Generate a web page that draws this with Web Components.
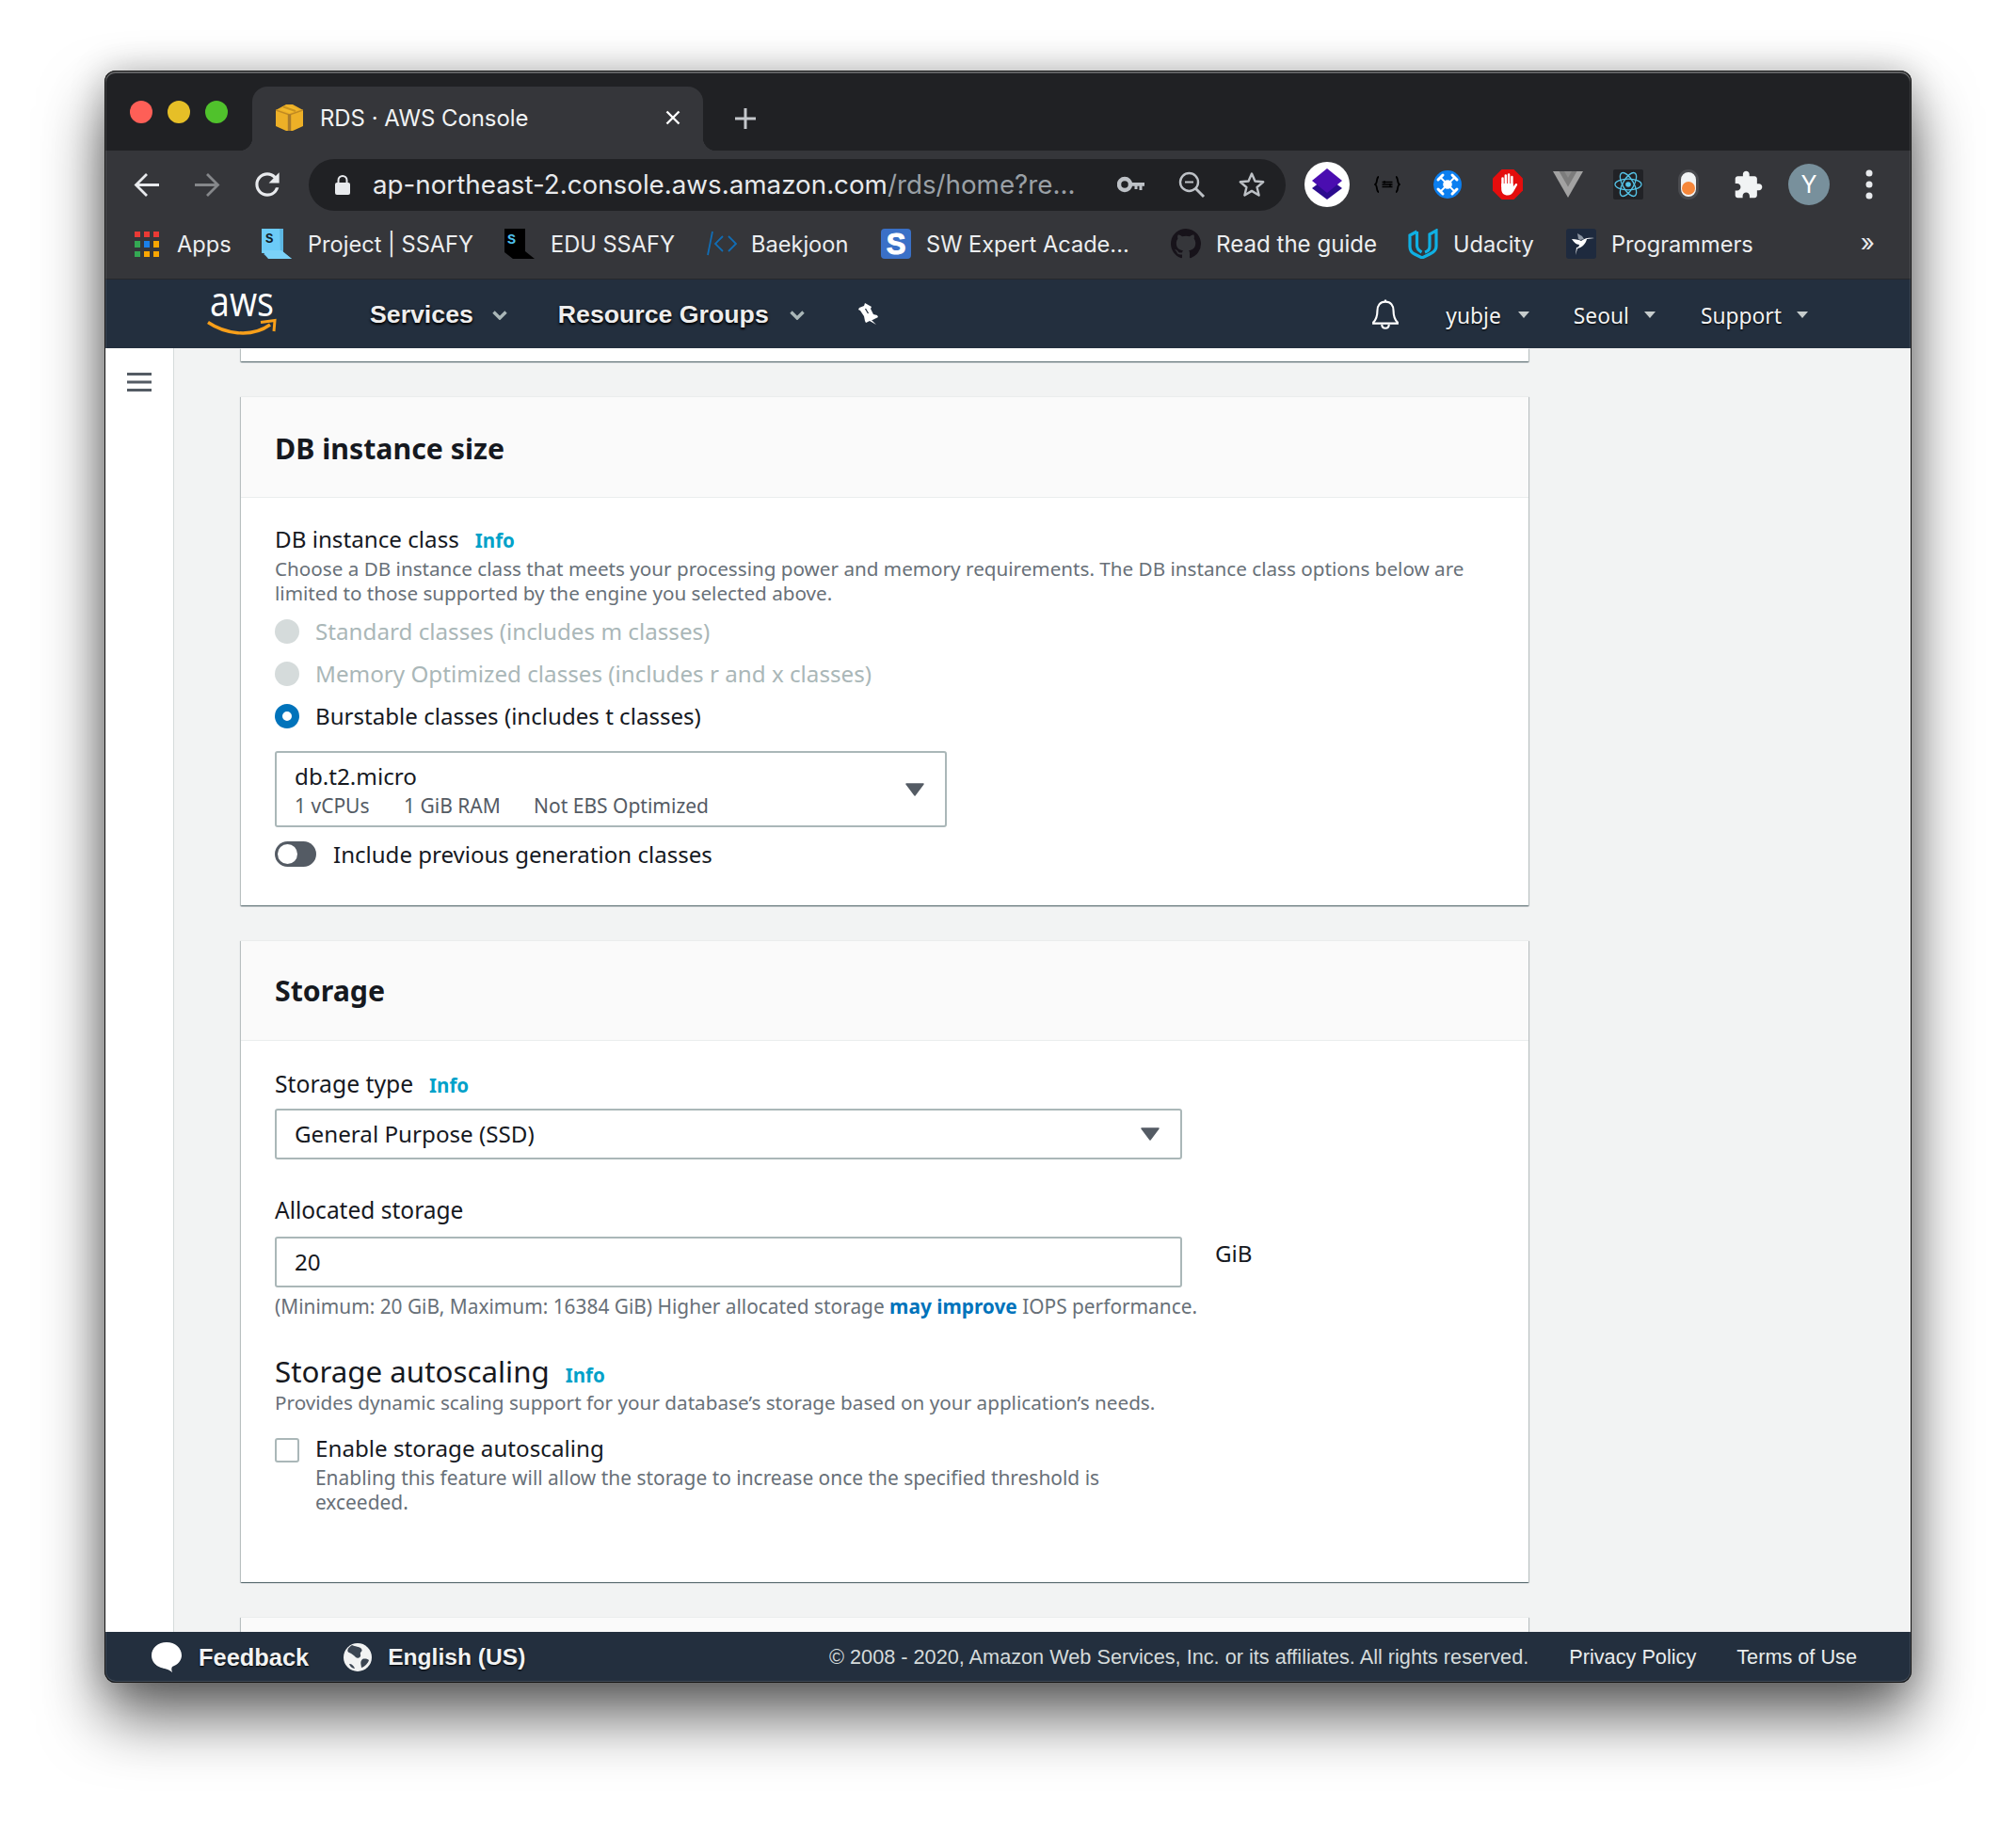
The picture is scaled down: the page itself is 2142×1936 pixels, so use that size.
<!doctype html>
<html lang="en"><head><meta charset="utf-8"><title>RDS · AWS Console</title>
<style>
html,body{margin:0;background:#fff}
body{padding:75px 111px 0;height:1936px;box-sizing:border-box;overflow:hidden;font-family:"Noto Sans",sans-serif}
</style></head>
<body>
<browser-window>
  <tab-strip>
    <traffic-lights></traffic-lights>
    <browser-tab label="RDS · AWS Console"><app-icon name="box"></app-icon></browser-tab>
  </tab-strip>
  <browser-toolbar>
    <address-row url="ap-northeast-2.console.aws.amazon.com" rest="/rds/home?re..."></address-row>
    <bookmark-bar>
      <bookmark-item w="135" gap="19"><app-icon name="apps"></app-icon>Apps</bookmark-item>
      <bookmark-item w="258" gap="17"><app-icon name="ssafy"></app-icon>Project | SSAFY</bookmark-item>
      <bookmark-item w="215" gap="17"><app-icon name="edu"></app-icon>EDU SSAFY</bookmark-item>
      <bookmark-item w="185" gap="15"><app-icon name="boj"></app-icon>Baekjoon</bookmark-item>
      <bookmark-item w="308" gap="16"><app-icon name="swea"></app-icon>SW Expert Acade...</bookmark-item>
      <bookmark-item w="252" gap="16" style="font-size:24.100px"><app-icon name="github"></app-icon>Read the guide</bookmark-item>
      <bookmark-item w="168" gap="16"><app-icon name="udacity"></app-icon>Udacity</bookmark-item>
      <bookmark-item w="200" gap="16"><app-icon name="programmers"></app-icon>Programmers</bookmark-item>
    </bookmark-bar>
  </browser-toolbar>
  <aws-nav></aws-nav>
  <console-main>
    <form-panel stub></form-panel>
    <form-panel heading="DB instance size" style="--head:108px;--hp:4px;--pad:29px;--bottom:41px">
      <field-label info="Info">DB instance class</field-label>
      <help-text style="margin-top:3px;font-size:20.670px">Choose a DB instance class that meets your processing power and memory requirements. The DB instance class options below are limited to those supported by the engine you selected above.</help-text>
      <radio-row disabled style="margin-top:5px">Standard classes (includes m classes)</radio-row>
      <radio-row disabled>Memory Optimized classes (includes r and x classes)</radio-row>
      <radio-row checked style="font-size:24.100px">Burstable classes (includes t classes)</radio-row>
      <select-box style="width:714px;height:81px;margin-top:15px" arrow="35">
        <div style="line-height:34px;margin-top:-1px">db.t2.micro</div>
        <instance-specs></instance-specs>
      </select-box>
      <toggle-row style="margin-top:15px">Include previous generation classes</toggle-row>
    </form-panel>
    <form-panel heading="Storage" style="--head:107px;--hp:1px;--pad:31px;--bottom:72px">
      <field-label info="Info" style="font-size:24.700px">Storage type</field-label>
      <select-box style="width:964px;height:54px;margin-top:11px" arrow="35">General Purpose (SSD)</select-box>
      <field-label style="margin-top:39px;font-size:24.500px">Allocated storage</field-label>
      <unit-row style="margin-top:13px" unit="GiB"><select-box style="width:964px;height:54px" noarrow>20</select-box></unit-row>
      <help-text style="margin-top:7px;white-space:nowrap;font-size:20.850px">(Minimum: 20 GiB, Maximum: 16384 GiB) Higher allocated storage <b style="color:#0073bb">may improve</b> IOPS performance.</help-text>
      <field-label large info="Info" style="margin-top:36px">Storage autoscaling</field-label>
      <help-text style="font-size:20.700px">Provides dynamic scaling support for your database’s storage based on your application’s needs.</help-text>
      <check-row style="margin-top:21px" desc="Enabling this feature will allow the storage to increase once the specified threshold is exceeded.">Enable storage autoscaling</check-row>
    </form-panel>
    <form-panel heading=" " style="--head:105px;--pad:0px;--bottom:0px"></form-panel>
  </console-main>
  <aws-footer></aws-footer>
</browser-window>

<script>
const ICONS={
box:`<svg width="29" height="28" viewBox="0 0 29 28"><path d="M0 6 11 0h7l11 6v17l-11 5h-7L0 23z" fill="#edb027"/><path d="M5 5.500 14.500 9 24 5.500 16 2h-3z" fill="#f2b92c"/><path d="M0 6l14.500 5L29 6" fill="none" stroke="#c08a22" stroke-width="1.500"/><path d="M12.800 10.500h3.400V28h-3.400z" fill="#a97c2c"/><path d="M8 2.500l13 4.500" stroke="#c9931f" stroke-width="2"/></svg>`,
close:`<svg width="18" height="18" viewBox="0 0 18 18"><path d="M2.500 2.500l13 13M15.500 2.500l-13 13" stroke="#fff" stroke-width="2.400" fill="none"/></svg>`,
plus:`<svg width="24" height="24" viewBox="0 0 24 24"><path d="M12 1v22M1 12h22" stroke="#c4c7cb" stroke-width="3" fill="none"/></svg>`,
back:`<svg width="28" height="28" viewBox="0 0 28 28"><path d="M27 14.500H3M14 3 2.500 14.500 14 26" stroke="#e8eaed" stroke-width="2.800" fill="none"/></svg>`,
forward:`<svg width="28" height="28" viewBox="0 0 28 28"><path d="M1 14.500h24M14 3l11.500 11.500L14 26" stroke="#85878a" stroke-width="2.800" fill="none"/></svg>`,
reload:`<svg width="38" height="38" viewBox="0 0 24 24"><path fill="#e8eaed" d="M17.650 6.350A7.958 7.958 0 0012 4c-4.420 0-7.990 3.580-7.990 8s3.570 8 7.990 8c3.730 0 6.840-2.550 7.730-6h-2.080A5.990 5.990 0 0112 18c-3.310 0-6-2.690-6-6s2.690-6 6-6c1.660 0 3.140.69 4.220 1.780L13 11h7V4l-2.350 2.350z"/></svg>`,
lock:`<svg width="16" height="21" viewBox="0 0 16 21"><rect y="8" width="16" height="13" rx="2" fill="#e8eaed"/><path d="M3.500 9V5.500a4.500 4.500 0 019 0V9" fill="none" stroke="#e8eaed" stroke-width="2"/></svg>`,
key:`<svg width="30" height="18" viewBox="0 0 30 18"><circle cx="8" cy="9" r="6" fill="none" stroke="#bdc1c6" stroke-width="4.500"/><path d="M13 7h16v3.800h-2.500V15h-3v-4.200h-2V14h-3v-3.200H13z" fill="#bdc1c6"/></svg>`,
zoom:`<svg width="30" height="30" viewBox="0 0 30 30"><circle cx="12.500" cy="12.500" r="9.500" fill="none" stroke="#bdc1c6" stroke-width="2.400"/><path d="M19.500 19.500 28 28" stroke="#bdc1c6" stroke-width="3"/><path d="M8 12.500h9" stroke="#bdc1c6" stroke-width="2.200"/></svg>`,
star:`<svg width="30" height="30" viewBox="0 0 30 30"><path d="M15 3.500l3.500 8 8.700.8-6.600 5.700 2 8.500L15 21.900l-7.600 4.600 2-8.500-6.600-5.700 8.700-.8z" fill="none" stroke="#bdc1c6" stroke-width="2.400" stroke-linejoin="round"/></svg>`,
stack:`<svg width="48" height="48" viewBox="0 0 48 48"><circle cx="24" cy="24" r="24" fill="#fff"/><path d="M8 28 24 16l16 12-16 12z" fill="#2b0b8e"/><path d="M8 20 24 7l16 13-16 13z" fill="#4a0db0"/></svg>`,
braces:`<svg width="28" height="18" viewBox="0 0 28 18" fill="none" stroke="#000" stroke-width="1.800"><path d="M5 1C2 1 4 8 1 9c3 1 1 8 4 8M23 1c3 0 1 7 4 8-3 1-1 8-4 8"/><path d="M8.500 6.500h11M8.500 9h11M8.500 11.500h11" stroke-width="1.400"/><path d="M11 5v3M17 8v3" stroke-width="1.300"/></svg>`,
drone:`<svg width="30" height="30" viewBox="0 0 30 30"><circle cx="15" cy="15" r="15" fill="#0b7ff0"/><path d="M7.500 7.500l15 15M22.500 7.500l-15 15" stroke="#fff" stroke-width="1.800"/><circle cx="15" cy="15" r="4.800" fill="#fff"/><g stroke="#fff" stroke-width="3" stroke-linecap="round"><path d="M5 10l5-5M20 5l5 5M5 20l5 5M25 20l-5 5"/></g></svg>`,
abp:`<svg width="32" height="32" viewBox="0 0 32 32"><path d="M9.500 0h13L32 9.500v13L22.500 32h-13L0 22.500v-13z" fill="#e40d0d"/><g stroke="#fff" stroke-width="2.500" stroke-linecap="round"><path d="M10.500 18V9.500M13.800 16V6.500M17.100 16V5.500M20.400 18V8"/></g><path d="M9.200 15h12.500v3.500l2.300-3c1-1 2.800-.2 2 1.300l-4 7c-1.300 2.400-3.300 3.700-6 3.700-4.300 0-6.800-2.700-6.800-6.500z" fill="#fff"/></svg>`,
vee:`<svg width="32" height="28" viewBox="0 0 32 28"><path d="M0 0h32L16 28z" fill="#a2a2a2"/><path d="M6.500 0h19L16 16.500z" fill="#7c7c7c"/><path d="M12 0h8l-4 7z" fill="#8c8c8c"/></svg>`,
react:`<svg width="32" height="32" viewBox="0 0 32 32"><rect width="32" height="32" rx="2" fill="#212226"/><g fill="none" stroke="#55c4e8" stroke-width="1.300"><ellipse cx="16" cy="16" rx="14" ry="5.800"/><ellipse cx="16" cy="16" rx="14" ry="5.800" transform="rotate(60 16 16)"/><ellipse cx="16" cy="16" rx="14" ry="5.800" transform="rotate(120 16 16)"/></g><circle cx="16" cy="16" r="2.800" fill="#55c4e8"/></svg>`,
pill:`<svg width="22" height="32" viewBox="0 0 22 32"><rect x="1.500" y="1.500" width="19" height="29" rx="9.500" fill="#f1f3f4" stroke="#4a4b4f" stroke-width="3"/><circle cx="11" cy="20" r="7" fill="#f6873a"/></svg>`,
puzzle:`<svg width="30" height="30" viewBox="1.500 1 22 21"><path fill="#f1f3f4" d="M20.500 11H19V7c0-1.100-.9-2-2-2h-4V3.500C13 2.120 11.880 1 10.500 1S8 2.120 8 3.500V5H4c-1.100 0-1.990.9-1.990 2v3.800H3.500c1.490 0 2.700 1.210 2.700 2.700s-1.210 2.700-2.700 2.700H2V20c0 1.100.9 2 2 2h3.800v-1.500c0-1.490 1.210-2.700 2.700-2.700 1.490 0 2.700 1.210 2.700 2.700V22H17c1.100 0 2-.9 2-2v-4h1.500c1.380 0 2.500-1.120 2.500-2.500S21.880 11 20.500 11z"/></svg>`,
dots:`<svg width="8" height="32" viewBox="0 0 8 32"><circle cx="4" cy="4" r="3.500" fill="#e8eaed"/><circle cx="4" cy="16" r="3.500" fill="#e8eaed"/><circle cx="4" cy="28" r="3.500" fill="#e8eaed"/></svg>`,
apps:`<svg width="26" height="27" viewBox="0 0 26 27"><g fill="#ea3a35"><rect width="6" height="6"/><rect x="10" width="6" height="6"/><rect x="20" width="6" height="6"/></g><rect y="10" width="6" height="7" fill="#34a853"/><rect x="10" y="10" width="6" height="7" fill="#1a80ea"/><rect x="20" y="10" width="6" height="7" fill="#f9a602"/><rect y="21" width="6" height="6" fill="#34a853"/><rect x="10" y="21" width="6" height="6" fill="#f9a602"/><rect x="20" y="21" width="6" height="6" fill="#f9a602"/></svg>`,
ssafy:`<svg width="32" height="32" viewBox="0 0 32 32"><path d="M0 0h23v26H0z" fill="#6ccbf7"/><path d="M19 0h4v25l9 7H8l-6-5h18z" fill="#5bb4df" opacity=".9"/><path d="M0 23h21l11 9H7z" fill="#7bd2f8"/><text x="4" y="15" font-family="Liberation Mono" font-weight="700" font-size="14" fill="#101c26">S</text></svg>`,
edu:`<svg width="32" height="32" viewBox="0 0 32 32"><path d="M0 0h22v24l10 8H9l-9-7z" fill="#000"/><text x="3" y="16" font-family="Liberation Mono" font-weight="700" font-size="15" fill="#4fc3f0">S</text></svg>`,
boj:`<svg width="32" height="32" viewBox="0 0 32 32" fill="none" stroke="#116db5" stroke-width="1.800"><path d="M6 3 1 28M17 8l-8 8 8 8M23 8l8 8-8 8"/></svg>`,
swea:`<svg width="32" height="32" viewBox="0 0 32 32"><rect width="32" height="32" rx="4" fill="#3a70c7"/><text x="16" y="27" text-anchor="middle" font-family="Liberation Sans" font-weight="700" font-size="31" fill="#fff" stroke="#fff" stroke-width="1">S</text></svg>`,
github:`<svg width="32" height="32" viewBox="0 0 16 16"><path fill="#17131a" d="M8 0C3.580 0 0 3.580 0 8c0 3.540 2.290 6.530 5.470 7.590.4.070.55-.17.55-.38 0-.19-.01-.82-.01-1.490-2.010.37-2.530-.49-2.690-.94-.09-.23-.48-.94-.82-1.130-.28-.15-.68-.52-.01-.53.63-.01 1.080.58 1.230.82.72 1.210 1.870.87 2.330.66.07-.52.28-.87.51-1.070-1.780-.2-3.640-.89-3.640-3.950 0-.87.31-1.590.82-2.150-.08-.2-.36-1.020.08-2.120 0 0 .67-.21 2.200.82.64-.18 1.320-.27 2-.27.68 0 1.360.09 2 .27 1.530-1.040 2.200-.82 2.200-.82.44 1.100.16 1.920.08 2.120.51.56.82 1.270.82 2.150 0 3.070-1.870 3.750-3.650 3.950.29.25.54.73.54 1.480 0 1.070-.01 1.930-.01 2.200 0 .21.15.46.55.38A8.013 8.013 0 0016 8c0-4.420-3.580-8-8-8z"/></svg>`,
udacity:`<svg width="32" height="32" viewBox="0 0 32 32" fill="none" stroke="#0fb0e3" stroke-width="3.200"><path d="M9.500 3 2 7v12c0 4 1 6 5 8l8 4 9-4.500c4-2 6-4 6-8V2l-7 4v13c0 3-2 5-5 6"/><path d="M9.500 3v15c0 3 1.500 5 5 7"/></svg>`,
programmers:`<svg width="32" height="32" viewBox="0 0 32 32"><rect width="32" height="32" rx="3" fill="#1e2a3e"/><path d="M6 11c5 0 8 1 10 2 3-2 6-4 14-3l-8 1c-1 5-5 9-10 10l-2 7 1-8c2 0 3-2 3-3-3 0-6-3-8-6z" fill="#fff"/><path d="M13 11l-1-6 5 3 2 3-4 1z" fill="#8d96a3"/></svg>`,
bell:`<svg width="30" height="33" viewBox="0 0 28 30" fill="none" stroke="#fff" stroke-width="2"><path d="M14 3c-5.500 0-8 4-8 9 0 6-2 9.500-4 11.500v1h24v-1c-2-2-4-5.500-4-11.500 0-5-2.500-9-8-9z"/><path d="M14 1v2M10.500 25.500c0 5 7 5 7 0" /></svg>`,
pin:`<svg width="23" height="23" viewBox="0 0 23 23"><path d="M7 0l7 4-1 2 3 6 4 1 1 2-6 3-1 0 5 5-7-4-4 2-1-2-1-5-4-6-2-1 1-2 5-2z" fill="#fff"/><path d="M7.500 6l3 5" stroke="#232f3e" stroke-width="1.300"/></svg>`,
bubble:`<svg width="32" height="32" viewBox="0 0 32 32"><path d="M16 0C7 0 0 6 0 14c0 6 4 11 10 13 3 1 8 1 12 5-1-3-1-4 0-6 6-2 10-7 10-12C32 6 25 0 16 0z" fill="#fff"/></svg>`,
globe:`<svg width="30" height="30" viewBox="0 0 30 30"><circle cx="15" cy="15" r="15" fill="#f2f3f3"/><path d="M9 2c3 2 8 1 10 4s-2 3-1 6-3 5-5 3-4-4-7-5-2-5 3-8zM20 17c3-1 6 0 7 1-1 3-4 7-8 8 0-3-2-6 1-9zM6 22c3 0 5 2 6 5-3-.5-5-2-6-5z" fill="#3b4552"/></svg>`
};
function comp(name,css,html,init){
  const t=document.createElement('template');
  t.innerHTML=`<style>${css}</style>${html}`;
  customElements.define(name,class extends HTMLElement{
    constructor(){super();this.attachShadow({mode:'open'}).appendChild(t.content.cloneNode(true));}
    connectedCallback(){if(init)init(this,this.shadowRoot);}
  });
}
comp('app-icon',':host{display:inline-flex;line-height:0;flex:none}','<span id="i"></span>',(h,s)=>{s.getElementById('i').innerHTML=ICONS[h.getAttribute('name')]||''});
comp('browser-window',`:host{display:flex;flex-direction:column;position:relative;width:1920px;height:1713px;border-radius:12px;background:#202124;box-shadow:0 36px 66px rgba(0,0,0,.62),0 0 36px rgba(0,0,0,.22)}
#clip{display:flex;flex-direction:column;flex:1;min-height:0;border-radius:12px;overflow:hidden}
#edge{position:absolute;inset:0;border-radius:12px;pointer-events:none;box-shadow:inset 0 0 0 1px #131313,inset 0 2px 0 1px rgba(255,255,255,.24),inset 0 0 0 2px rgba(255,255,255,.14)}`,
`<div id="clip"><slot></slot></div><div id="edge"></div>`);
comp('tab-strip',`:host{display:flex;height:85px;flex:none;background:#202124;align-items:flex-end}`,`<slot></slot><app-icon name="plus" style="margin:0 0 22px 33px"></app-icon>`);
comp('traffic-lights',`:host{display:flex;gap:16px;padding:0 26px 29px 27px;align-self:flex-end}i{width:24px;height:24px;border-radius:50%;display:block}`,`<i style="background:#fe5f57"></i><i style="background:#e6bf27"></i><i style="background:#50c22c"></i>`);
comp('browser-tab',`:host{display:flex;align-items:center;box-sizing:border-box;width:479px;height:68px;background:#35363a;border-radius:16px 16px 0 0;padding:0 23px 2px 25px;position:relative;font:400 23.900px Inter,sans-serif;color:#f1f3f4}
:host::before,:host::after{content:"";position:absolute;bottom:0;width:14px;height:14px}
:host::before{left:-14px;background:radial-gradient(circle at 0 0,#202124 14px,#35363a 14.500px)}
:host::after{right:-14px;background:radial-gradient(circle at 100% 0,#202124 14px,#35363a 14.500px)}
#l{margin-left:18px;flex:1;white-space:nowrap}`,`<slot></slot><span id="l"></span><app-icon name="close"></app-icon>`,(h,s)=>{s.getElementById('l').textContent=h.getAttribute('label')});
comp('browser-toolbar',`:host{display:block;flex:none;height:136px;background:#35363a;border-bottom:1px solid #27282b}`,`<slot></slot>`);
comp('address-row',`:host{display:flex;align-items:center;height:72px;padding-left:13px}
.s{width:64px;height:64px;display:flex;align-items:center;justify-content:center;flex:none}
#o{width:1038px;height:55px;margin:0 12px;box-sizing:border-box;background:#202124;border-radius:28px;display:flex;align-items:center;padding:0 4px 0 28px;flex:none}
#t{flex:1;margin-left:24px;font:400 27.750px Inter,sans-serif;color:#e8eaed;white-space:nowrap}
#t span{color:#9aa0a6}`,
`<div class="s"><app-icon name="back"></app-icon></div><div class="s"><app-icon name="forward"></app-icon></div><div class="s"><app-icon name="reload"></app-icon></div>
<div id="o"><app-icon name="lock"></app-icon><div id="t"><b style="font-weight:400" id="u"></b><span id="r"></span></div><div class="s"><app-icon name="key"></app-icon></div><div class="s"><app-icon name="zoom"></app-icon></div><div class="s"><app-icon name="star"></app-icon></div></div>
<div class="s"><app-icon name="stack"></app-icon></div><div class="s"><app-icon name="braces"></app-icon></div><div class="s"><app-icon name="drone"></app-icon></div><div class="s"><app-icon name="abp"></app-icon></div><div class="s"><app-icon name="vee"></app-icon></div><div class="s"><app-icon name="react"></app-icon></div><div class="s"><app-icon name="pill"></app-icon></div><div class="s"><app-icon name="puzzle"></app-icon></div>
<div class="s"><span style="width:44px;height:44px;border-radius:50%;background:#78909c;color:#fff;display:flex;align-items:center;justify-content:center;font:400 25px Inter,sans-serif">Y</span></div><div class="s"><app-icon name="dots"></app-icon></div>`,
(h,s)=>{s.getElementById('u').textContent=h.getAttribute('url');s.getElementById('r').textContent=h.getAttribute('rest')});
comp('bookmark-bar',`:host{display:flex;align-items:center;height:54px;padding:0 0 2px 32px;position:relative}#m{margin-left:auto;margin-right:39px;color:#e8eaed;font:400 26px Inter,sans-serif;margin-top:-3px}`,`<slot></slot><span id="m">»</span>`);
comp('bookmark-item',`:host{display:flex;align-items:center;flex:none;font:400 23.600px Inter,sans-serif;color:#eceef0;white-space:nowrap}`,`<slot></slot>`,(h,s)=>{
  h.style.width=h.getAttribute('w')+'px';
  const ic=h.querySelector('app-icon'); if(ic) ic.style.marginRight=h.getAttribute('gap')+'px';
});
comp('nav-text',`:host{display:block;white-space:nowrap;margin-top:2px;font:700 26.700px "Liberation Sans",sans-serif;color:#eee;text-shadow:0 1px 3px #000,0 2px 2px rgba(0,0,0,.6)}`,`<slot></slot>`);
comp('nav-caret',`:host{display:block;flex:none;margin-top:3px}`,`<svg width="16" height="10" viewBox="0 0 16 10" style="display:block"><path d="M1.500 1.500 8 8l6.500-6.500" fill="none" stroke="#aab7b8" stroke-width="3.400"/></svg>`);
comp('nav-arrow',`:host{display:block;flex:none;width:0;height:0;border:6px solid transparent;border-top:7px solid #c6cccc;border-bottom:0;margin-top:1px}`,``);
comp('aws-nav',`:host{display:flex;align-items:center;flex:none;height:73px;background:#232f3e;padding:0 110px 0 109px;box-sizing:border-box}
.r{font:400 22.800px "Noto Sans",sans-serif;color:#f2f3f3;white-space:nowrap;text-shadow:0 1px 2px #000;margin-top:3px}
svg text{font-family:"Open Sans",sans-serif}`,
`<svg width="74" height="52" viewBox="0 0 74 52" style="flex:none;overflow:visible"><text x="3" y="27.500" font-size="43" textLength="68" lengthAdjust="spacingAndGlyphs" fill="#fff">aws</text><path d="M1 34.500C18 46 46 52 67 37" fill="none" stroke="#f79f1a" stroke-width="3.400"/><path d="M57 34.500 72 32.500 71 44" fill="none" stroke="#f79f1a" stroke-width="3"/></svg>
<nav-text style="margin-left:99px">Services</nav-text><nav-caret style="margin-left:20px"></nav-caret>
<nav-text style="margin-left:54px">Resource Groups</nav-text><nav-caret style="margin-left:22px"></nav-caret>
<app-icon name="pin" style="margin:0 0 0 57px"></app-icon>
<app-icon name="bell" style="margin-left:auto"></app-icon>
<span class="r" style="margin-left:49px">yubje</span><nav-arrow style="margin-left:18px"></nav-arrow>
<span class="r" style="margin-left:47px">Seoul</span><nav-arrow style="margin-left:16px"></nav-arrow>
<span class="r" style="margin-left:48px">Support</span><nav-arrow style="margin-left:16px"></nav-arrow>`);
comp('console-main',`:host{display:flex;flex:1;min-height:0;background:#f2f3f3;overflow:hidden}
#rail{width:73px;flex:none;background:#fff;border-right:1px solid #d5dbdb;padding-top:26px}
#rail svg{display:block;margin-left:24px}
#c{display:flex;flex-direction:column;gap:37px;margin-left:71px;width:1368px}`,
`<div id="rail"><svg width="26" height="20" viewBox="0 0 26 20"><path d="M0 1.500h26M0 10h26M0 18.500h26" stroke="#545b64" stroke-width="3"/></svg></div><div id="c"><slot></slot></div>`);
comp('form-panel',`:host{display:block;flex:none;background:#fff;box-shadow:0 1px 1px 0 rgba(0,28,36,.42),1px 1px 1px 0 rgba(0,28,36,.18),-1px 1px 1px 0 rgba(0,28,36,.18)}
:host([stub]){height:14px}:host([stub]) header,:host([stub]) main{display:none}
header{height:var(--head);box-sizing:border-box;background:#fafafa;border-top:1px solid #eaeded;border-bottom:1px solid #eaeded;display:flex;align-items:center;padding:var(--hp,2px) 36px 0;font:700 30.300px/40px "Noto Sans",sans-serif;color:#16191f;white-space:pre}
main{padding:var(--pad) 36px var(--bottom);font:400 24.200px/30px "Noto Sans",sans-serif;color:#16191f}`,
`<header id="h"></header><main><slot></slot></main>`,(h,s)=>{s.getElementById('h').textContent=h.getAttribute('heading')||''});
comp('field-label',`:host{display:flex;align-items:baseline;font:400 24.200px/30px "Noto Sans",sans-serif;color:#16191f;white-space:nowrap}
:host([large]){font-size:31.300px;line-height:40px}
#i{font:700 20.500px "Noto Sans",sans-serif;color:#00a1c9;margin-left:17px}`,`<slot></slot><span id="i"></span>`,(h,s)=>{s.getElementById('i').textContent=h.getAttribute('info')||''});
comp('help-text',`:host{display:block;font:400 20.850px/26px "Noto Sans",sans-serif;color:#687078}`,`<slot></slot>`);
comp('radio-row',`:host{display:flex;align-items:center;height:45px;font-size:24.200px;white-space:nowrap;color:#16191f}
:host([disabled]){color:#aab7b8}
#r{width:26px;height:26px;border-radius:50%;margin-right:17px;flex:none;box-sizing:border-box}
:host([disabled]) #r{background:#d5dbdb}
:host([checked]) #r{border:8px solid #0073bb;background:#fff}`,`<span id="r"></span><slot></slot>`);
comp('select-box',`:host{display:flex;flex-direction:column;justify-content:center;box-sizing:border-box;position:relative;background:#fff;border:2px solid #aab7b8;border-radius:3px;padding:0 60px 0 19px;color:#16191f;font-size:24.200px}
svg{position:absolute;top:50%;margin-top:-7px;right:22px}:host([noarrow]) svg{display:none}`,`<slot></slot><svg width="20" height="14" viewBox="0 0 20 14"><path d="M1 1h18l-9 12z" fill="#545b64" stroke="#545b64" stroke-width="1.500" stroke-linejoin="round"/></svg>`);
comp('instance-specs',`:host{display:flex;font:400 21px/26px "Noto Sans",sans-serif;color:#545b64;white-space:nowrap;margin-top:1px}
span{display:block}`,`<span style="width:116px">1 vCPUs</span><span style="width:138px">1 GiB RAM</span><span>Not EBS Optimized</span>`);
comp('toggle-row',`:host{display:flex;align-items:center;height:27px;font-size:24.050px;white-space:nowrap}
#t{width:44px;height:27px;border-radius:14px;background:#545b64;margin-right:18px;flex:none;box-sizing:border-box;padding:3px}
#t i{display:block;width:21px;height:21px;border-radius:50%;background:#fff}`,`<span id="t"><i></i></span><slot></slot>`);
comp('unit-row',`:host{display:flex;align-items:flex-start}#u{margin-left:35px;line-height:30px;margin-top:3px;color:#16191f}`,`<slot></slot><span id="u"></span>`,(h,s)=>{s.getElementById('u').textContent=h.getAttribute('unit')});
comp('check-row',`:host{display:grid;grid-template-columns:26px 920px;column-gap:17px;color:#16191f}
#c{width:26px;height:26px;box-sizing:border-box;border:2px solid #aab7b8;border-radius:3px;background:#fff;margin-top:4px}
#d{margin-top:3px;font-size:20.920px}`,`<span id="c"></span><div><slot></slot><help-text id="d"></help-text></div>`,(h,s)=>{s.getElementById('d').textContent=h.getAttribute('desc')});
comp('aws-footer',`:host{display:flex;align-items:center;flex:none;height:54px;background:#232f3e;padding:0 58px 0 50px;box-sizing:border-box;font:400 21.700px "Liberation Sans",sans-serif;color:#eaeded;white-space:nowrap}
b{margin-left:18px;color:#f2f3f3;text-shadow:0 1px 2px #000}span{display:block}`,
`<app-icon name="bubble"></app-icon><b style="font-size:25.400px">Feedback</b><app-icon name="globe" style="margin-left:37px"></app-icon><b style="font-size:24.600px;margin-left:17px">English (US)</b>
<span style="margin-left:auto;color:#d5dbdb">© 2008 - 2020, Amazon Web Services, Inc. or its affiliates. All rights reserved.</span><span style="margin-left:43px">Privacy Policy</span><span style="margin-left:43px">Terms of Use</span>`);
</script>
</body></html>
